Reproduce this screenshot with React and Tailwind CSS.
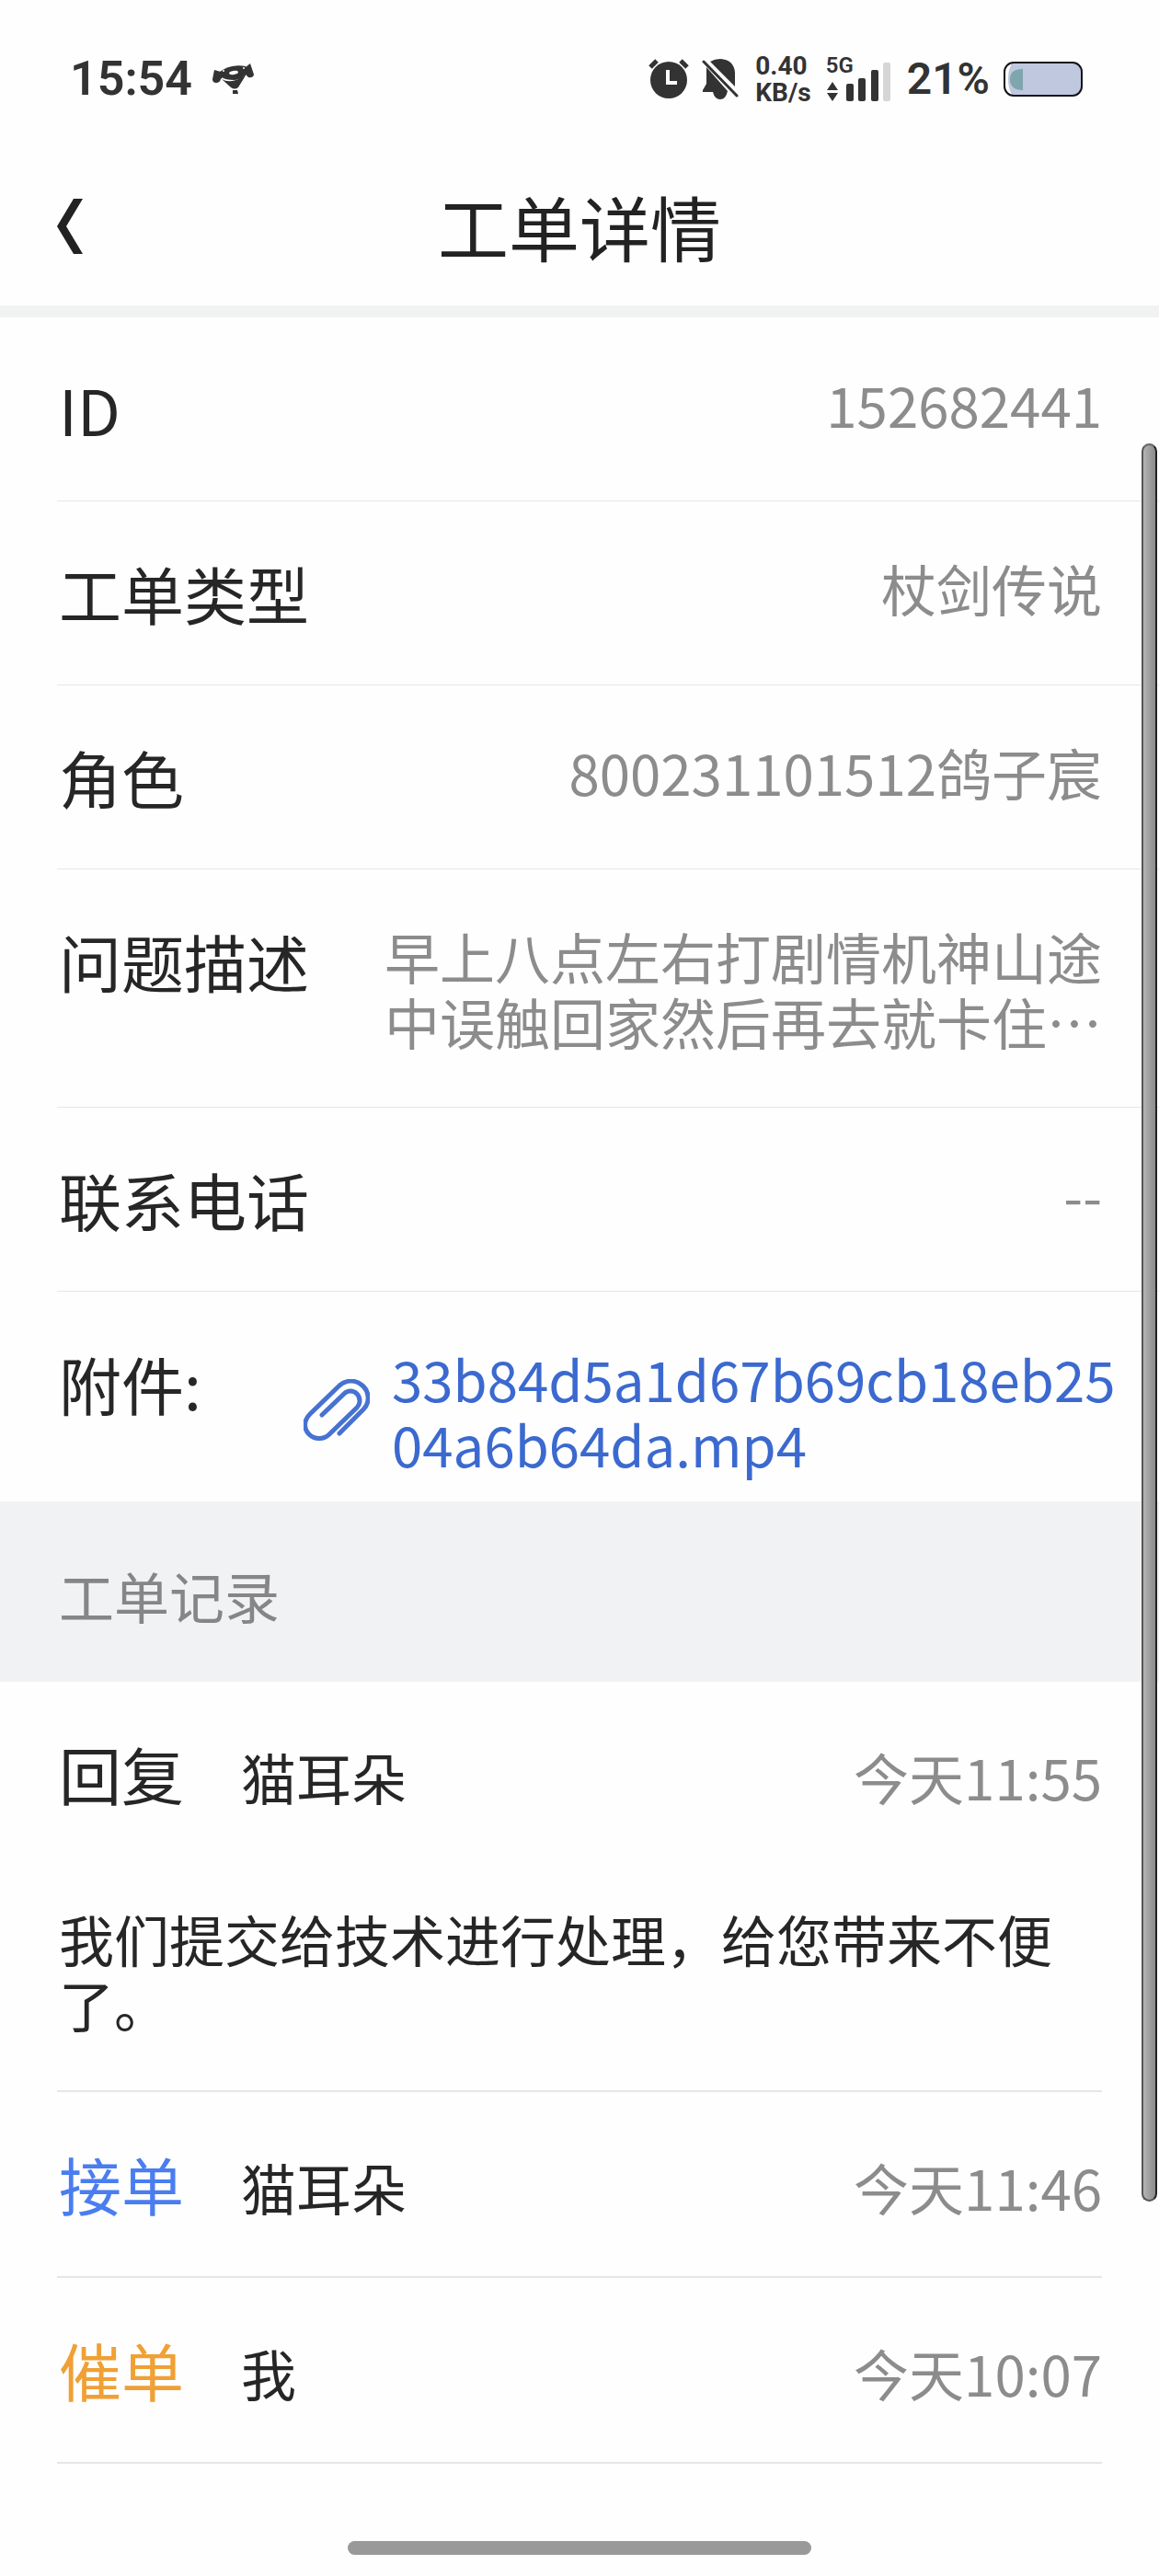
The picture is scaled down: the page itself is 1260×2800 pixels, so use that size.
import React from 'react';

const details = [
  { label: 'ID', value: '152682441' },
  { label: '工单类型', value: '杖剑传说' },
  { label: '角色', value: '800231101512鸽子宸' },
  { label: '问题描述', value: '早上八点左右打剧情机神山途中误触回家然后再去就卡住⋯' },
  { label: '联系电话', value: '--' },
];

const records = [
  {
    type: '回复',
    color: 'text-[#262626]',
    name: '猫耳朵',
    time: '今天11:55',
    message: '我们提交给技术进行处理，给您带来不便了。',
  },
  { type: '接单', color: 'text-[#4a7df0]', name: '猫耳朵', time: '今天11:46' },
  { type: '催单', color: 'text-[#f0a035]', name: '我', time: '今天10:07' },
];

const BalloonIcon = () => (
  <svg className="h-[34px] w-[46px]" viewBox="0 0 46 34" fill="#333">
    <path d="M2 7 L9 9 L11 15 L9 17 Q8 21 4 21 Q0 21 0 17 Z" />
    <path d="M36 4 L41 0 L45 12 Q44 16 39 15 L36 12 Z" />
    <path d="M8 9 Q20 0 36 3 L38 10 Q34 17 24 18 Q14 18 10 15 Z" />
    <path d="M10 17 Q20 23 36 13 L28 26 Q24 29 20 26 Z" />
    <path d="M22 29 H27 L28 33 H22 Z" />
    <ellipse cx="23" cy="10" rx="5" ry="2" fill="#fefefe" transform="rotate(-8 23 10)" />
    <circle cx="12" cy="8" r="1" fill="#fefefe" />
    <circle cx="34" cy="5" r="1" fill="#fefefe" />
  </svg>
);

const AlarmIcon = () => (
  <svg className="h-[44px] w-[44px]" viewBox="0 0 44 44" fill="#333">
    <circle cx="22" cy="23" r="20" />
    <path d="M2 9 L9 2 M42 9 L35 2" stroke="#333" strokeWidth="5" />
    <path d="M21 12 V26 H31" fill="none" stroke="#fefefe" strokeWidth="4" />
  </svg>
);

const MutedBellIcon = () => (
  <svg className="h-[46px] w-[40px]" viewBox="0 0 40 46" fill="#333">
    <path d="M9 4 Q14 1 20 1 Q35 2 36 16 V31 Z" />
    <path d="M5 10 L28 36 Q26 45 20 45 Q14 45 12 37 H1 V35 L5 28 Z" />
    <path d="M3 1 L39 38" stroke="#fefefe" strokeWidth="4" />
    <path d="M2 4 L38 41" stroke="#333" strokeWidth="3" strokeLinecap="round" />
  </svg>
);

const SignalIcon = () => (
  <svg className="h-[50px] w-[72px]" viewBox="0 0 72 50" fill="#333">
    <path d="M7 28 L13 37 H1 Z M7 49 L13 40 H1 Z" />
    <rect x="22" y="30" width="8" height="19" rx="2" />
    <rect x="35" y="24" width="8" height="25" rx="2" />
    <rect x="49" y="15" width="8" height="34" rx="2" />
    <rect x="62" y="7" width="8" height="42" rx="2" fill="#d6d6d6" />
  </svg>
);

const BatteryIcon = () => (
  <svg className="h-[40px] w-[88px]" viewBox="0 0 88 40">
    <rect x="2" y="2" width="84" height="36" rx="10" fill="#bfc8de" />
    <path d="M10 3 Q3 4 3 12 V28 Q3 36 10 37 Q6 30 6 20 Q6 10 10 3 Z" fill="#fefefe" />
    <rect x="2" y="2" width="84" height="36" rx="10" fill="none" stroke="#14141c" strokeWidth="2" />
    <path d="M22 9 V32 H20 Q8 31 8 20 Q8 10 20 9 Z" fill="#7fa5ae" />
  </svg>
);

const PaperclipIcon = () => (
  <svg
    className="h-[68px] w-[72px] shrink-0"
    viewBox="0 0 72 68"
    fill="none"
    stroke="#4672d2"
    strokeWidth="5"
    strokeLinecap="round"
  >
    <path d="M39 59 L65 33 C73 25 71 13 64 7 C56 0 46 1 39 7 L7 38 C0 45 0 54 6 60 C12 66 22 66 28 60 L58 31 C62 27 62 20 58 16 C54 12 48 12 44 16 L20 39" />
  </svg>
);

const StatusBar = () => (
  <div className="flex h-[168px] items-center justify-between pt-1 pr-[82px] pl-[76px] font-['Roboto',sans-serif] text-[#333]">
    <div className="flex items-center gap-[22px]">
      <span className="text-[52px] leading-[60px] font-semibold">15:54</span>
      <BalloonIcon />
    </div>
    <div className="flex items-center">
      <AlarmIcon />
      <div className="ml-[14px]">
        <MutedBellIcon />
      </div>
      <div className="ml-[18px] text-[28px] leading-[29px] font-bold">
        <div>0.40</div>
        <div>KB/s</div>
      </div>
      <div className="relative ml-[16px]">
        <span className="absolute top-0 left-0 text-[24px] leading-[20px] font-semibold">5G</span>
        <SignalIcon />
      </div>
      <span className="ml-[16px] text-[48px] leading-[60px] font-semibold">21%</span>
      <div className="ml-[14px]">
        <BatteryIcon />
      </div>
    </div>
  </div>
);

const DetailRow = ({ label, value }) => (
  <div className="ml-[62px] flex justify-between border-b border-[#e6e6e6] py-[58px] pr-[62px]">
    <dt className="shrink-0 pl-[2px] text-[68px] leading-[83px] text-[#262626]">{label}</dt>
    <dd className="max-w-[780px] text-[60px] leading-[71px] text-[#8c8c8c]">{value}</dd>
  </div>
);

const RecordItem = ({ type, color, name, time, message }) => (
  <li className="mx-[62px] border-b-2 border-[#e6e6e6] pt-[58px] pb-[59px]">
    <div className="flex h-[83px] items-baseline pl-[2px] text-[60px] leading-[83px]">
      <span className={`text-[68px] ${color}`}>{type}</span>
      <span className="ml-[62px] text-[#262626]">{name}</span>
      <time className="ml-auto text-[#8c8c8c]">{time}</time>
    </div>
    {message && <p className="mt-[102px] pl-[2px] text-[60px] leading-[71px] text-[#262626]">{message}</p>}
  </li>
);

const App = () => {
  return (
    <div className="min-h-screen bg-[#fefefe] font-['Noto_Sans_CJK_SC',sans-serif]">
      <StatusBar />

      {/* Title bar */}
      <header className="grid h-[164px] grid-cols-[1fr_auto_1fr] items-center pb-2">
        <button type="button" aria-label="返回" className="ml-[60px] w-[32px]">
          <svg className="h-[60px] w-[32px]" viewBox="0 0 32 60" fill="#222">
            <path d="M20 0 H30 L12 30 L30 60 H20 L2 30 Z" />
          </svg>
        </button>
        <h1 className="text-[77px] leading-[90px] text-[#222]">工单详情</h1>
      </header>
      <div className="h-[13px] bg-[#f1f3f3]" />

      <main className="relative">
        <dl>
          {details.map((item) => (
            <DetailRow key={item.label} label={item.label} value={item.value} />
          ))}
          <div className="flex pt-[58px] pr-[30px] pb-[28px] pl-[64px]">
            <dt className="w-[266px] shrink-0 text-[68px] leading-[83px] text-[#262626]">附件:</dt>
            <dd className="flex flex-1 items-center gap-6">
              <PaperclipIcon />
              <a href="#attachment" className="text-[60px] leading-[71px] break-all text-[#3b69cf]">
                33b84d5a1d67b69cb18eb2504a6b64da.mp4
              </a>
            </dd>
          </div>
        </dl>

        <h2 className="bg-[#f1f2f4] pt-[66px] pb-[59px] pl-[64px] text-[60px] leading-[71px] text-[#868686]">
          工单记录
        </h2>

        <ul>
          {records.map((record) => (
            <RecordItem key={record.type} {...record} />
          ))}
        </ul>

        {/* Scroll thumb */}
        <div className="absolute top-[137px] right-[2px] h-[1911px] w-[17px] rounded-full border-2 border-t-[#666] border-r-[#222] border-b-[#555] border-l-[#555] bg-linear-to-r from-[#b4b4b4] to-[#8c8c8c]" />
      </main>

      {/* Home indicator */}
      <div className="mx-auto mt-[84px] h-[15px] w-2/5 rounded-full bg-[#999]" />
    </div>
  );
};

export default App;
